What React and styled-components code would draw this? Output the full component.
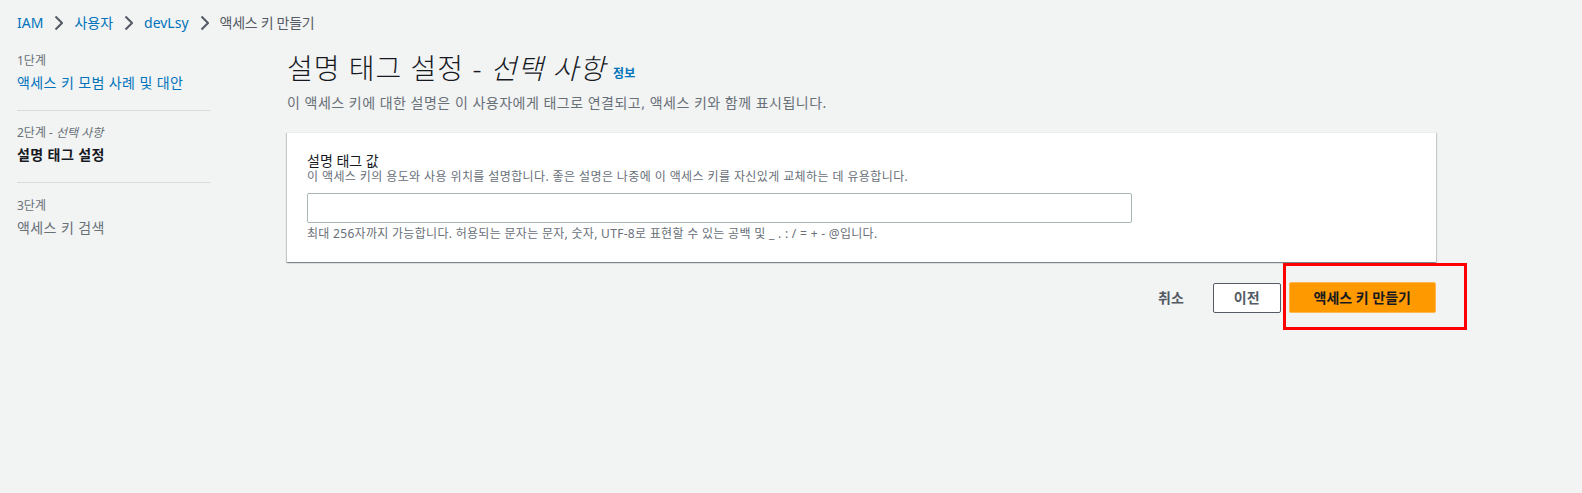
import React from 'react';
import styled, { createGlobalStyle } from 'styled-components';

const GlobalStyle = createGlobalStyle`
  body {
    margin: 0;
    background: #f2f3f3;
    font-family: "Noto Sans", "Noto Sans CJK KR", sans-serif;
    color: #16191f;
  }
`;

const steps = [
  { label: '1단계', name: '액세스 키 모범 사례 및 대안', state: 'done' },
  { label: '2단계', optional: '선택 사항', name: '설명 태그 설정', state: 'current' },
  { label: '3단계', name: '액세스 키 검색', state: 'todo' },
];

const crumbs = ['IAM', '사용자', 'devLsy'];

function Chevron() {
  return (
    <svg width="9" height="16" viewBox="0 0 9 16" fill="none">
      <path d="M1.5 1.5 8 8l-6.5 6.5" stroke="#545b64" strokeWidth="2" />
    </svg>
  );
}

export default function App() {
  return (
    <Page>
      <GlobalStyle />
      <Breadcrumbs>
        {crumbs.map((c) => (
          <React.Fragment key={c}>
            <Crumb href="#">{c}</Crumb>
            <Chevron />
          </React.Fragment>
        ))}
        <Current>액세스 키 만들기</Current>
      </Breadcrumbs>

      <Layout>
        <Steps>
          {steps.map((s) => (
            <Step key={s.label}>
              <StepLabel>
                {s.label}
                {s.optional && <em> - {s.optional}</em>}
              </StepLabel>
              <StepName $state={s.state}>{s.name}</StepName>
            </Step>
          ))}
        </Steps>

        <Content>
          <Title>
            설명 태그 설정 - <em>선택 사항</em>
            <Info href="#">정보</Info>
          </Title>
          <Description>
            이 액세스 키에 대한 설명은 이 사용자에게 태그로 연결되고, 액세스 키와 함께 표시됩니다.
          </Description>

          <Card>
            <Label>설명 태그 값</Label>
            <Hint>이 액세스 키의 용도와 사용 위치를 설명합니다. 좋은 설명은 나중에 이 액세스 키를 자신있게 교체하는 데 유용합니다.</Hint>
            <Input type="text" />
            <Constraint>최대 256자까지 가능합니다. 허용되는 문자는 문자, 숫자, UTF-8로 표현할 수 있는 공백 및 _ . : / = + - @입니다.</Constraint>
          </Card>

          <Actions>
            <Button $variant="link">취소</Button>
            <Button $variant="normal">이전</Button>
            <Highlight>
              <Button $variant="primary">액세스 키 만들기</Button>
              <RedBox />
            </Highlight>
          </Actions>
        </Content>
      </Layout>
    </Page>
  );
}

const Page = styled.div`
  min-height: 493px;
`;

const Breadcrumbs = styled.nav`
  display: flex;
  align-items: center;
  gap: 11px;
  padding: 12px 17px 0;
  height: 22px;
  font-size: 14px;
  line-height: 22px;
`;

const Crumb = styled.a`
  color: #0073bb;
  text-decoration: none;
`;

const Current = styled.span`
  color: #545b64;
  letter-spacing: -0.3px;
`;

const Layout = styled.div`
  display: grid;
  grid-template-columns: 193px 1fr;
  column-gap: 77px;
  padding: 18px 146px 0 17px;
`;

const Steps = styled.ol`
  list-style: none;
  margin: 0;
  padding: 0;
`;

const Step = styled.li`
  padding: 13px 0 16px;
  border-bottom: 1px solid #d5dbdb;

  &:first-child {
    padding-top: 0;
  }

  &:last-child {
    border-bottom: none;
    padding-top: 14px;
  }
`;

const StepLabel = styled.div`
  font-size: 12px;
  line-height: 18px;
  color: #687078;

  em {
    font-style: italic;
  }
`;

const StepName = styled.div`
  margin-top: 2px;
  font-size: 14px;
  line-height: 22px;
  letter-spacing: 0.4px;
  color: ${(p) => (p.$state === 'done' ? '#0073bb' : p.$state === 'current' ? '#16191f' : '#687078')};
  font-weight: ${(p) => (p.$state === 'current' ? 700 : 400)};
`;

const Content = styled.main`
  display: flex;
  flex-direction: column;
`;

const Title = styled.h1`
  margin: 0;
  font-size: 28px;
  font-weight: 300;
  line-height: 32px;
  letter-spacing: 1px;
  color: #16191f;

  em {
    font-style: italic;
  }
`;

const Info = styled.a`
  margin-left: 7px;
  font-size: 12px;
  font-weight: 700;
  letter-spacing: 0.3px;
  color: #0073bb;
  text-decoration: none;
  vertical-align: 1px;
`;

const Description = styled.p`
  margin: 2px 0 0;
  font-size: 14px;
  line-height: 22px;
  letter-spacing: 0.5px;
  color: #687078;
`;

const Card = styled.section`
  margin-top: 18px;
  padding: 20px 20px 21px;
  background: #fff;
  border-top: 1px solid #eaeded;
  box-shadow: 0 1px 1px 0 rgba(0, 28, 36, 0.3), 1px 1px 1px 0 rgba(0, 28, 36, 0.15),
    -1px 1px 1px 0 rgba(0, 28, 36, 0.15);
  display: flex;
  flex-direction: column;
  align-items: flex-start;
`;

const Label = styled.label`
  font-size: 14px;
  line-height: 16px;
  color: #16191f;
`;

const Hint = styled.div`
  font-size: 12px;
  line-height: 12px;
  margin-top: 2px;
  letter-spacing: 0.4px;
  color: #687078;
`;

const Input = styled.input`
  box-sizing: border-box;
  margin: 10px 0 0;
  width: 825px;
  height: 30px;
  border: 1px solid #aab7b8;
  border-radius: 2px;
  background: #fff;
  outline: none;
`;

const Constraint = styled.div`
  margin-top: 4px;
  font-size: 12px;
  line-height: 14px;
  letter-spacing: 0.3px;
  color: #687078;
`;

const Actions = styled.div`
  display: flex;
  justify-content: flex-end;
  align-items: center;
  gap: 8px;
  margin-top: 20px;
`;

const Button = styled.button`
  box-sizing: border-box;
  height: ${(p) => (p.$variant === 'primary' ? '31px' : '30px')};
  padding: 0 ${(p) => (p.$variant === 'primary' ? '24px' : '20px')};
  font-family: inherit;
  font-size: 14px;
  font-weight: 700;
  line-height: 22px;
  border-radius: 2px;
  cursor: pointer;
  border: 1px solid
    ${(p) => (p.$variant === 'primary' ? '#ffb84d' : p.$variant === 'normal' ? '#545b64' : 'transparent')};
  background: ${(p) => (p.$variant === 'primary' ? '#ff9900' : p.$variant === 'normal' ? '#fff' : 'transparent')};
  color: ${(p) => (p.$variant === 'primary' ? '#16191f' : '#545b64')};
`;

const Highlight = styled.div`
  position: relative;
  display: flex;
`;

const RedBox = styled.div`
  position: absolute;
  top: -19px;
  left: -6px;
  right: -31px;
  bottom: -17px;
  border: 3px solid #f00;
  pointer-events: none;
`;
